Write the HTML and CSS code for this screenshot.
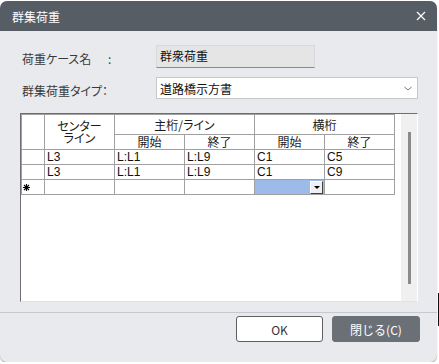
FILE: index.html
```html
<!DOCTYPE html>
<html lang="ja">
<head>
    <meta charset="UTF-8">
    <meta name="viewport" content="width=device-width, initial-scale=1.0">
    <title>群集荷重</title>
    <link rel="stylesheet" href="styles.css">
</head>
<body>
    <div class="dialog">
        <div class="titlebar">
            <span class="title">群集荷重</span>
            <svg class="close-x" width="10" height="10" viewBox="0 0 10 10">
                <path d="M1 1L9 9M9 1L1 9" stroke="#fff" stroke-width="1.2" fill="none"/>
            </svg>
        </div>

        <div class="content">
            <div class="field">
                <div class="label"><span class="label-name">荷重ケース名</span><span class="colon">:</span></div>
                <div class="textbox">群衆荷重</div>
            </div>
            <div class="field">
                <div class="label">群集荷重タイプ：</div>
                <div class="select">
                    <span>道路橋示方書</span>
                    <svg width="8" height="5" viewBox="0 0 8 5">
                        <path d="M0.5 1L4 4L7.5 1" stroke="#777" stroke-width="1" fill="none"/>
                    </svg>
                </div>
            </div>

            <div class="grid">
                <div class="grid-view">
                    <table>
                        <colgroup>
                            <col class="rh">
                            <col class="dc"><col class="dc"><col class="dc"><col class="dc"><col class="dc">
                        </colgroup>
                        <tr class="head1">
                            <th rowspan="2"></th>
                            <th rowspan="2" class="two-line"><span>センター</span><span>ライン</span></th>
                            <th colspan="2">主桁/ライン</th>
                            <th colspan="2">横桁</th>
                        </tr>
                        <tr>
                            <th>開始</th><th>終了</th><th>開始</th><th>終了</th>
                        </tr>
                        <tr>
                            <td></td><td>L3</td><td>L:L1</td><td>L:L9</td><td>C1</td><td>C5</td>
                        </tr>
                        <tr>
                            <td></td><td>L3</td><td>L:L1</td><td>L:L9</td><td>C1</td><td>C9</td>
                        </tr>
                        <tr>
                            <td class="new-row">
                                <svg width="7" height="7" viewBox="0 0 7 7">
                                    <path d="M3.5 0V7M0 3.5H7M1 1L6 6M6 1L1 6" stroke="#000" stroke-width="1.1" fill="none"/>
                                </svg>
                            </td>
                            <td></td><td></td><td></td>
                            <td class="editing"><span class="drop-btn"><span class="tri"></span></span></td>
                            <td></td>
                        </tr>
                    </table>
                </div>
                <div class="vscroll"><div class="thumb"></div></div>
            </div>
        </div>

        <div class="footer">
            <button class="btn btn-ok">OK</button>
            <button class="btn btn-close">閉じる(C)</button>
        </div>
    </div>
    <div class="edge-mark"></div>
</body>
</html>
```

FILE: styles.css
```css
body { margin: 0; background: #fff; font-family: "Noto Sans CJK JP", "Noto Sans", sans-serif; }

.dialog { width: 437px; height: 361px; margin-top: 1px; background: #e9eaee; border-radius: 7px; overflow: hidden; display: flex; flex-direction: column; box-shadow: 0 1px 1px rgba(0,0,0,.35); }

.titlebar { flex: none; height: 30px; background: #575d65; color: #fff; display: flex; align-items: center; justify-content: space-between; padding: 0 11px 0 12px; font-size: 12px; }
.title { line-height: 16px; padding-top: 1px; }

.content { padding: 14px 19px 0 20px; }
.field { display: flex; align-items: flex-start; }
.field + .field { margin-top: 9px; }
.label { width: 136px; box-sizing: border-box; padding: 6px 0 0 2px; font-size: 12px; line-height: 16px; color: #3a3a3a; font-feature-settings: "palt"; white-space: nowrap; }
.label-name { display: inline-block; width: 85px; }
.colon { display: inline-block; margin-left: 1px; }

.textbox { width: 159px; height: 23px; box-sizing: border-box; background: #e5e5e5; border: 1px solid #d8d8d8; border-bottom-color: #8a8a8a; padding: 0 3px; font-size: 12px; line-height: 20px; color: #111; }
.select { flex: 1; height: 22px; box-sizing: border-box; background: #fff; border: 1px solid #c8c8c8; display: flex; align-items: center; justify-content: space-between; padding: 0 5px 0 3px; font-size: 12px; color: #111; }

.grid { margin-top: 14px; height: 189px; box-sizing: border-box; display: flex; background: #fff; border: 1px solid; border-color: #6f6f6f #fff #e2e2e2 #6f6f6f; }
.grid-view { flex: 1; }
.vscroll { width: 16px; background: #f0f0f0; padding: 18px 0 17px 7px; box-sizing: border-box; display: flex; }
.thumb { width: 3px; background: #8b8b8b; }

table { table-layout: fixed; width: 374px; border-collapse: separate; border-spacing: 1px; background: #a0a0a0; font-size: 12px; }
col.rh { width: 22px; }
col.dc { width: 69px; }
th, td { background: #fff; padding: 0; height: 14px; line-height: 14px; white-space: nowrap; }
th { font-weight: normal; text-align: center; color: #1a1a1a; font-feature-settings: "palt"; }
td { padding-left: 2px; font-family: "Liberation Sans", "Noto Sans CJK JP", sans-serif; color: #111; overflow: hidden; }
.head1 th { height: 19px; }
.two-line span { display: block; height: 12px; line-height: 12px; }

.new-row { padding-left: 1px; vertical-align: middle; }
.new-row svg { display: block; }
.editing { background: #9dbbe8; padding: 0 1px 0 0; }
.drop-btn { float: right; width: 13px; height: 13px; box-sizing: border-box; background: #f0f0f0; border: 1px solid; border-color: #fff #404040 #404040 #fff; display: flex; align-items: center; justify-content: center; }
.tri { width: 0; height: 0; border-left: 3px solid transparent; border-right: 3px solid transparent; border-top: 3px solid #000; }

.footer { flex: none; margin-top: 10px; border-top: 1px solid #c5c8cd; padding: 3px 17px 0; display: flex; justify-content: flex-end; gap: 9px; }
.btn { width: 87px; height: 26px; border-radius: 3px; font-family: "Noto Sans CJK JP", sans-serif; font-size: 12px; padding: 0; }
.btn-ok { background: #fff; border: 1px solid #5f5f5f; color: #333; }
.btn-close { width: 88px; background: #6b7077; border: 1px solid #6b7077; color: #fff; }

.edge-mark { position: absolute; left: 438px; top: 293px; width: 1px; height: 33px; background: #111; }
```
